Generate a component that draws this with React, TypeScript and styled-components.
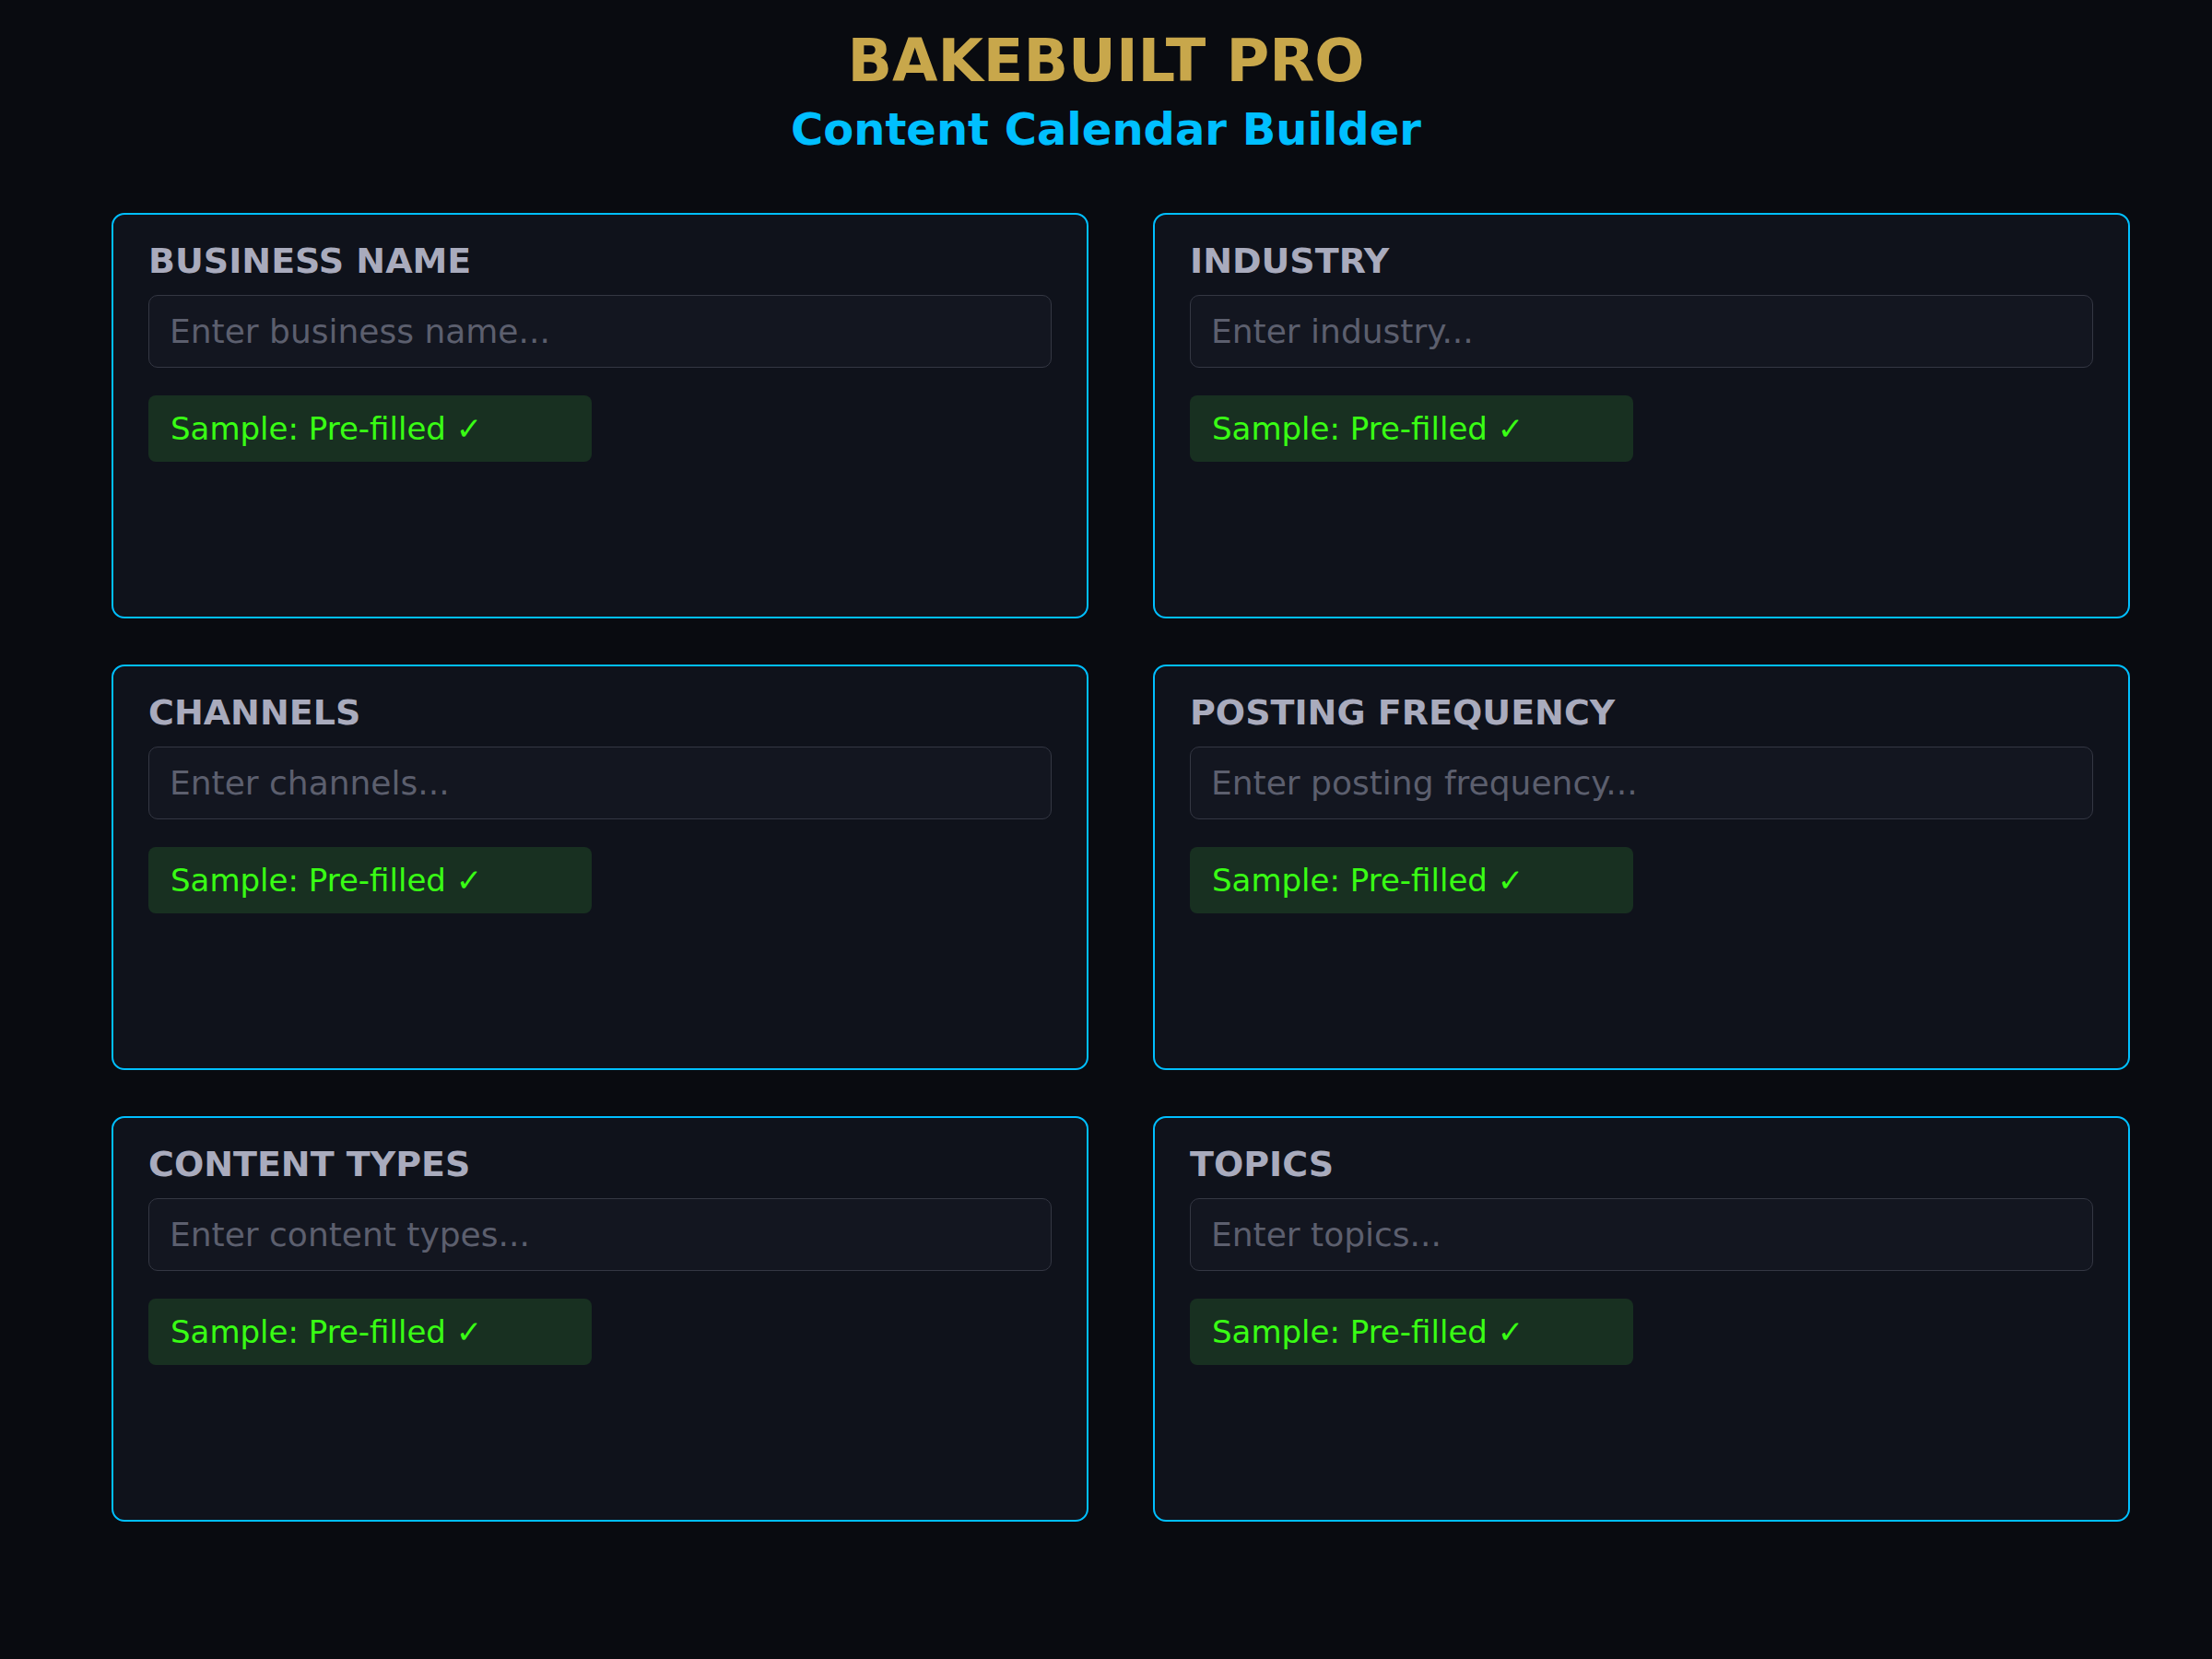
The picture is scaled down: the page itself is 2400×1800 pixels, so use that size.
import styled, { createGlobalStyle } from 'styled-components';

const GlobalStyle = createGlobalStyle`
	html, body {
		margin: 0;
		padding: 0;
		background: #090b10;
	}

	body {
		font-family: 'DejaVu Sans', Verdana, sans-serif;
		min-height: 1800px;
	}

	* {
		box-sizing: border-box;
	}
`;

const FIELDS = [
	{ id: 'business', label: 'BUSINESS NAME', placeholder: 'Enter business name...' },
	{ id: 'industry', label: 'INDUSTRY', placeholder: 'Enter industry...' },
	{ id: 'channels', label: 'CHANNELS', placeholder: 'Enter channels...' },
	{ id: 'frequency', label: 'POSTING FREQUENCY', placeholder: 'Enter posting frequency...' },
	{ id: 'types', label: 'CONTENT TYPES', placeholder: 'Enter content types...' },
	{ id: 'topics', label: 'TOPICS', placeholder: 'Enter topics...' },
];

const Page = styled.div`
	min-height: 1800px;
	padding-top: 29px;
	background: #090b10;
`;

const Header = styled.header`
	display: flex;
	flex-direction: column;
	align-items: center;
	gap: 9px;
`;

const Title = styled.h1`
	margin: 0;
	font-size: 63.8px;
	font-weight: bold;
	line-height: normal;
	color: #c8a74b;
`;

const Subtitle = styled.h2`
	margin: 0;
	font-size: 48px;
	font-weight: bold;
	line-height: normal;
	color: #00bfff;
`;

const Grid = styled.main`
	display: grid;
	grid-template-columns: 1060px 1060px;
	column-gap: 70px;
	row-gap: 50px;
	margin: 63px 0 0 121px;
`;

const Card = styled.section`
	display: flex;
	flex-direction: column;
	align-items: flex-start;
	height: 440px;
	padding: 28px 38px;
	background: #0f121b;
	border: 2px solid #00bfff;
	border-radius: 14px;
`;

const Label = styled.label`
	font-size: 38px;
	font-weight: bold;
	line-height: normal;
	color: #a9abbd;
`;

const Input = styled.input`
	width: 100%;
	margin-top: 15px;
	padding: 18px 22px;
	font-family: inherit;
	font-size: 36px;
	line-height: normal;
	color: #d0d2dc;
	background: #131620;
	border: 1px solid #343743;
	border-radius: 10px;
	outline: none;

	&::placeholder {
		color: #5c5f6e;
	}
`;

const Badge = styled.div`
	width: 481px;
	margin-top: 30px;
	padding: 16px 24px;
	font-size: 34px;
	line-height: normal;
	color: #39ff14;
	background: #183021;
	border-radius: 8px;
`;

export default function App() {
	return (
		<>
			<GlobalStyle />
			<Page>
				<Header>
					<Title>BAKEBUILT PRO</Title>
					<Subtitle>Content Calendar Builder</Subtitle>
				</Header>

				<Grid>
					{FIELDS.map(({ id, label, placeholder }) => (
						<Card key={id}>
							<Label htmlFor={id}>{label}</Label>
							<Input id={id} placeholder={placeholder} readOnly />
							<Badge>Sample: Pre-filled ✓</Badge>
						</Card>
					))}
				</Grid>
			</Page>
		</>
	);
}
